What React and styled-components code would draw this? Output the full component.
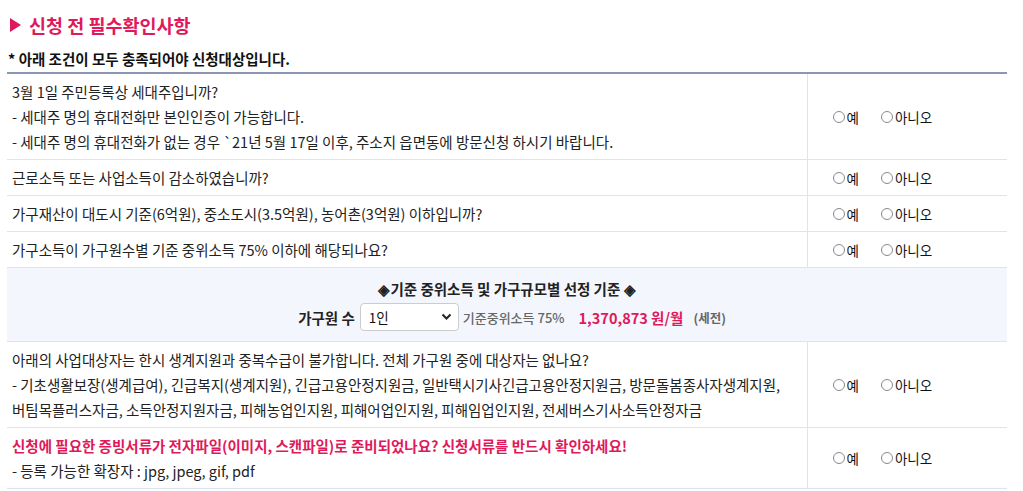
import React from "react";
import styled, { createGlobalStyle } from "styled-components";

const Global = createGlobalStyle`
  html, body { margin: 0; padding: 0; background: #fff; }
  body { font-family: "Noto Sans CJK KR", "Noto Sans", sans-serif; color: #222; }
  * { box-sizing: border-box; }
`;

const Page = styled.div`
  padding: 8px 16px 0 7px;
  width: 1023px;
`;

const Title = styled.h2`
  margin: 0 0 0 3px;
  font-size: 18.5px;
  line-height: 34px;
  font-weight: 700;
  color: #e0195b;
  display: flex;
  align-items: center;
  gap: 8px;
`;

const Tri = styled.span`
  display: inline-block;
  width: 0;
  height: 0;
  border-top: 7px solid transparent;
  border-bottom: 7px solid transparent;
  border-left: 11px solid #e0195b;
`;

const Sub = styled.p`
  margin: 4px 0 0 1px;
  font-size: 14.5px;
  line-height: 26px;
  font-weight: 700;
  color: #111;
`;

const Table = styled.table`
  width: 1000px;
  border-collapse: collapse;
  border-top: 2px solid #8a96b4;
  font-size: 14.5px;
`;

const Row = styled.tr`
  border-bottom: 1px solid #dde3f0;
  background: ${(p) => (p.$shade ? "#f4f6fd" : "#fff")};
`;

const Q = styled.td`
  width: 800px;
  padding: 5px 5px;
  line-height: 25px;
  vertical-align: middle;
  border-right: 1px solid #dde3f0;
  color: #222;
`;

const A = styled.td`
  padding: 0 0 0 25px;
  vertical-align: middle;
`;

const Line = styled.div`
  color: ${(p) => (p.$pink ? "#e0195b" : "#222")};
  font-weight: ${(p) => (p.$pink ? 700 : 400)};
`;

const RadioGroup = styled.div`
  display: flex;
  align-items: center;
  gap: 22px;
  font-size: 13.5px;
  color: #111;
`;

const RadioLabel = styled.label`
  display: flex;
  align-items: center;
  gap: 2px;
`;

const Circle = styled.span`
  display: inline-block;
  width: 12px;
  height: 12px;
  border: 1px solid #8a8a8a;
  border-radius: 50%;
  background: #fff;
`;

const Criteria = styled.td`
  padding: 9px 0 10px;
  text-align: center;
`;

const CritTitle = styled.div`
  font-size: 14.5px;
  font-weight: 700;
  line-height: 24px;
  color: #222;
`;

const CritRow = styled.div`
  display: flex;
  justify-content: center;
  align-items: center;
  margin-top: 2px;
  padding-left: 10px;
`;

const CritLabel = styled.span`
  font-size: 14.5px;
  font-weight: 700;
  color: #222;
  margin-right: 5px;
`;

const Select = styled.div`
  width: 99px;
  height: 28px;
  background: #fff;
  border: 1px solid #ccc;
  border-radius: 4px;
  display: flex;
  align-items: center;
  justify-content: space-between;
  padding: 0 6px 0 8px;
  font-size: 13.5px;
  color: #111;
  margin-right: 4px;
`;

const Gray = styled.span`
  font-size: ${(p) => (p.$bold ? "12.5px" : "13px")};
  color: #666;
  font-weight: ${(p) => (p.$bold ? 700 : 500)};
`;

const Amount = styled.span`
  font-size: 14.5px;
  font-weight: 700;
  color: #e0195b;
  margin: 0 10px 0 14px;
`;

const Radios = () => (
  <RadioGroup>
    <RadioLabel>
      <Circle />예
    </RadioLabel>
    <RadioLabel>
      <Circle />아니오
    </RadioLabel>
  </RadioGroup>
);

export default function App() {
  return (
    <>
      <Global />
      <Page>
        <Title>
          <Tri />신청 전 필수확인사항
        </Title>
        <Sub>* 아래 조건이 모두 충족되어야 신청대상입니다.</Sub>
        <Table>
          <tbody>
            <Row>
              <Q>
                <Line>3월 1일 주민등록상 세대주입니까?</Line>
                <Line>- 세대주 명의 휴대전화만 본인인증이 가능합니다.</Line>
                <Line>- 세대주 명의 휴대전화가 없는 경우 `21년 5월 17일 이후, 주소지 읍면동에 방문신청 하시기 바랍니다.</Line>
              </Q>
              <A><Radios /></A>
            </Row>
            <Row>
              <Q><Line>근로소득 또는 사업소득이 감소하였습니까?</Line></Q>
              <A><Radios /></A>
            </Row>
            <Row>
              <Q><Line>가구재산이 대도시 기준(6억원), 중소도시(3.5억원), 농어촌(3억원) 이하입니까?</Line></Q>
              <A><Radios /></A>
            </Row>
            <Row>
              <Q><Line>가구소득이 가구원수별 기준 중위소득 75% 이하에 해당되나요?</Line></Q>
              <A><Radios /></A>
            </Row>
            <Row $shade>
              <Criteria colSpan={2}>
                <CritTitle>◈기준 중위소득 및 가구규모별 선정 기준 ◈</CritTitle>
                <CritRow>
                  <CritLabel>가구원 수</CritLabel>
                  <Select>
                    <span>1인</span>
                    <svg width="11" height="8" viewBox="0 0 11 8">
                      <path d="M1.5 1.5 L5.5 5.5 L9.5 1.5" fill="none" stroke="#222" strokeWidth="2" />
                    </svg>
                  </Select>
                  <Gray>기준중위소득 75%</Gray>
                  <Amount>1,370,873 원/월</Amount>
                  <Gray $bold>(세전)</Gray>
                </CritRow>
              </Criteria>
            </Row>
            <Row>
              <Q>
                <Line>아래의 사업대상자는 한시 생계지원과 중복수급이 불가합니다. 전체 가구원 중에 대상자는 없나요?</Line>
                <Line>- 기초생활보장(생계급여), 긴급복지(생계지원), 긴급고용안정지원금, 일반택시기사긴급고용안정지원금, 방문돌봄종사자생계지원,</Line>
                <Line>버팀목플러스자금, 소득안정지원자금, 피해농업인지원, 피해어업인지원, 피해임업인지원, 전세버스기사소득안정자금</Line>
              </Q>
              <A><Radios /></A>
            </Row>
            <Row>
              <Q>
                <Line $pink>신청에 필요한 증빙서류가 전자파일(이미지, 스캔파일)로 준비되었나요? 신청서류를 반드시 확인하세요!</Line>
                <Line>- 등록 가능한 확장자 : jpg, jpeg, gif, pdf</Line>
              </Q>
              <A><Radios /></A>
            </Row>
          </tbody>
        </Table>
      </Page>
    </>
  );
}
